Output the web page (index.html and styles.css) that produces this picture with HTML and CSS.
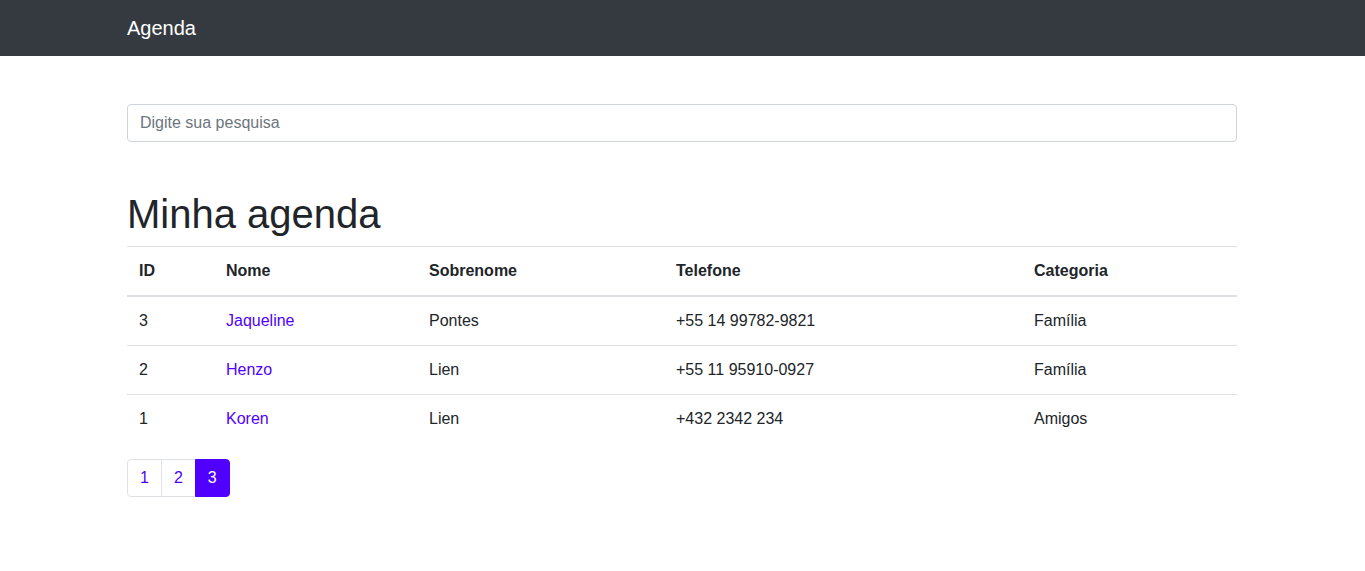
FILE: index.html
```html
<!DOCTYPE html>
<html lang="pt-BR">
<head>
<meta charset="utf-8">
<title>Agenda</title>
<link rel="stylesheet" href="styles.css">
</head>
<body>
<nav class="navbar">
  <div class="container">
    <a class="brand" href="#">Agenda</a>
  </div>
</nav>
<main class="container main">
  <input class="search" type="text" placeholder="Digite sua pesquisa">
  <h1 class="title">Minha agenda</h1>
  <table class="table">
    <colgroup>
      <col class="c-id"><col class="c-nome"><col class="c-sobre"><col class="c-tel"><col class="c-cat">
    </colgroup>
    <thead>
      <tr><th>ID</th><th>Nome</th><th>Sobrenome</th><th>Telefone</th><th>Categoria</th></tr>
    </thead>
    <tbody>
      <tr><td>3</td><td><a href="#">Jaqueline</a></td><td>Pontes</td><td>+55 14 99782-9821</td><td>Família</td></tr>
      <tr><td>2</td><td><a href="#">Henzo</a></td><td>Lien</td><td>+55 11 95910-0927</td><td>Família</td></tr>
      <tr><td>1</td><td><a href="#">Koren</a></td><td>Lien</td><td>+432 2342 234</td><td>Amigos</td></tr>
    </tbody>
  </table>
  <ul class="pagination">
    <li><a class="page-link" href="#">1</a></li>
    <li><a class="page-link" href="#">2</a></li>
    <li><a class="page-link active" href="#">3</a></li>
  </ul>
</main>
</body>
</html>
```

FILE: styles.css
```css
* { box-sizing: border-box; }
html, body {
  margin: 0;
  font-family: "Liberation Sans", Arial, sans-serif;
  font-size: 16px;
  line-height: 1.5;
  color: #212529;
  background: #fff;
}
.container {
  width: 1141px;
  margin: 0 auto;
  padding: 0 16px 0 15px;
}
.navbar {
  background: #343a40;
  padding: 8px 0;
  height: 56px;
}
.brand {
  display: inline-block;
  color: #fff;
  font-size: 20px;
  line-height: 30px;
  padding: 5px 0;
  text-decoration: none;
}
.main {
  padding-top: 48px;
}
.search {
  display: block;
  width: 100%;
  height: 38px;
  padding: 6px 12px;
  font-family: inherit;
  font-size: 16px;
  line-height: 1.5;
  color: #495057;
  border: 1px solid #ced4da;
  border-radius: 4px;
  outline: none;
}
.search::placeholder { color: #6c757d; }
.title {
  margin: 48px 0 8px;
  font-size: 40px;
  font-weight: 500;
  line-height: 1.2;
}
.table {
  width: 100%;
  border-collapse: collapse;
  margin-bottom: 16px;
}
.c-id { width: 87px; }
.c-nome { width: 203px; }
.c-sobre { width: 247px; }
.c-tel { width: 358px; }
.c-cat { width: 215px; }
.table th, .table td {
  padding: 12px;
  text-align: left;
  vertical-align: top;
  border-top: 1px solid #dee2e6;
  line-height: 24px;
}
.table th { font-weight: 700; }
.table thead th { border-bottom: 2px solid #dee2e6; }
.table a { color: #5000ff; text-decoration: none; }
.pagination {
  display: flex;
  list-style: none;
  margin: 0;
  padding: 0;
}
.page-link {
  display: block;
  padding: 8px 12px;
  line-height: 20px;
  color: #5000ff;
  text-decoration: none;
  border: 1px solid #dee2e6;
  margin-left: -1px;
}
.pagination li:first-child .page-link {
  margin-left: 0;
  border-radius: 4px 0 0 4px;
}
.pagination li:last-child .page-link {
  border-radius: 0 4px 4px 0;
}
.page-link.active {
  background: #5000ff;
  border-color: #5000ff;
  color: #fff;
}
```
